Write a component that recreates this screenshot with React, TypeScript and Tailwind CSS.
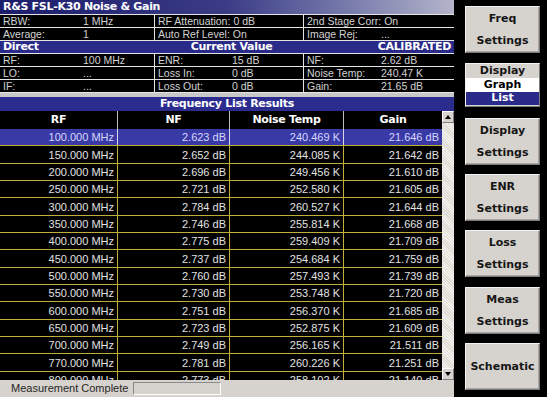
import React from "react";

const rows: string[][] = [
  ["100.000 MHz", "2.623 dB", "240.469 K", "21.646 dB"],
  ["150.000 MHz", "2.652 dB", "244.085 K", "21.642 dB"],
  ["200.000 MHz", "2.696 dB", "249.456 K", "21.610 dB"],
  ["250.000 MHz", "2.721 dB", "252.580 K", "21.605 dB"],
  ["300.000 MHz", "2.784 dB", "260.527 K", "21.644 dB"],
  ["350.000 MHz", "2.746 dB", "255.814 K", "21.668 dB"],
  ["400.000 MHz", "2.775 dB", "259.409 K", "21.709 dB"],
  ["450.000 MHz", "2.737 dB", "254.684 K", "21.759 dB"],
  ["500.000 MHz", "2.760 dB", "257.493 K", "21.739 dB"],
  ["550.000 MHz", "2.730 dB", "253.748 K", "21.720 dB"],
  ["600.000 MHz", "2.751 dB", "256.370 K", "21.685 dB"],
  ["650.000 MHz", "2.723 dB", "252.875 K", "21.609 dB"],
  ["700.000 MHz", "2.749 dB", "256.165 K", "21.511 dB"],
  ["770.000 MHz", "2.781 dB", "260.226 K", "21.251 dB"],
  ["800.000 MHz", "2.773 dB", "258.102 K", "21.140 dB"],
];

const sans = "font-['Liberation_Sans',Arial,sans-serif]";
const bold = "font-['DejaVu_Sans',Verdana,sans-serif] font-bold";

function InfoCell({ label, value, lw }: { label: string; value: string; lw: string }) {
  return (
    <div className="bg-black flex items-center pl-[3px] text-[#d2d2d2] text-[10.5px] leading-[12px] overflow-hidden whitespace-nowrap">
      <span className={`${lw} shrink-0 pr-[3px]`}>{label}</span>
      <span>{value}</span>
    </div>
  );
}

function InfoRow({ cells }: { cells: [string, string][] }) {
  return (
    <div className="grid grid-cols-[154px_148px_1fr] gap-px h-[12px]">
      <InfoCell label={cells[0][0]} value={cells[0][1]} lw="min-w-[80px]" />
      <InfoCell label={cells[1][0]} value={cells[1][1]} lw="min-w-[74px]" />
      <InfoCell label={cells[2][0]} value={cells[2][1]} lw="min-w-[74px]" />
    </div>
  );
}

function Button({ lines, className }: { lines: string[]; className: string }) {
  return (
    <div
      className={`w-[75px] h-[47px] ml-[11px] bg-[#d6d3ce] border border-t-[#f4f4f4] border-l-[#f4f4f4] border-r-[#7a7a7a] border-b-[#7a7a7a] shadow-[inset_-1px_-1px_0_#a8a5a0] flex flex-col items-center justify-center text-[11px] leading-[22px] text-[#161616] ${bold} ${className}`}
    >
      {lines.map((l) => (
        <span key={l}>{l}</span>
      ))}
    </div>
  );
}

export default function App() {
  return (
    <div className={`w-[547px] h-[409px] bg-white overflow-hidden ${sans}`}>
      <div className="flex h-[397px] bg-black">
        {/* Left panel */}
        <div className="w-[454px] flex flex-col bg-black">
          <div className={`h-[14px] bg-gradient-to-r from-[#1c1c6c] via-[#3c3c86] to-[#b4b4ca] text-white text-[11px] leading-[14px] pl-[3px] ${bold} tracking-[-0.3px]`}>
            R&amp;S FSL-K30 Noise &amp; Gain
          </div>
          <div className="flex flex-col gap-px bg-[#e4e4e4] pt-px">
            <InfoRow cells={[["RBW:", "1 MHz"], ["RF Attenuation:", "0 dB"], ["2nd Stage Corr:", "On"]]} />
            <InfoRow cells={[["Average:", "1"], ["Auto Ref Level:", "On"], ["Image Rej:", "..."]]} />
            <div className={`h-[12px] bg-[#2a2a88] text-white text-[11px] leading-[12px] flex items-center px-[3px] ${bold} tracking-[-0.3px]`}>
              <span>Direct</span>
              <span className="ml-[152px]">Current Value</span>
              <span className="ml-auto">CALIBRATED</span>
            </div>
            <InfoRow cells={[["RF:", "100 MHz"], ["ENR:", "15 dB"], ["NF:", "2.62 dB"]]} />
            <InfoRow cells={[["LO:", "..."], ["Loss In:", "0 dB"], ["Noise Temp:", "240.47 K"]]} />
            <InfoRow cells={[["IF:", "..."], ["Loss Out:", "0 dB"], ["Gain:", "21.65 dB"]]} />
            <div className="h-[4px] bg-[#c8c8c8]" />
          </div>
          <div className={`h-[14px] bg-[#2c2c8e] text-white text-[11px] leading-[14px] text-center ${bold} tracking-[-0.3px]`}>
            Frequency List Results
          </div>
          {/* table area */}
          <div className="flex h-[269px] overflow-hidden">
            <div className="w-[442px] flex flex-col">
              <div className={`h-[18px] shrink-0 grid grid-cols-[117px_111px_113px_1fr] gap-px bg-[#bdbdbd] text-white text-[11px] ${bold} tracking-[-0.3px]`}>
                {["RF", "NF", "Noise Temp", "Gain"].map((h) => (
                  <div key={h} className="bg-black flex items-center justify-center">
                    {h}
                  </div>
                ))}
              </div>
              <div className="flex flex-col gap-px bg-[#bfae3a]">
                {rows.map((r, i) => (
                  <div
                    key={r[0]}
                    className={`h-[16.35px] shrink-0 grid grid-cols-[117px_111px_113px_1fr] gap-px text-[11px] leading-[16px] ${i === 0 ? "bg-[#d8d8e8]" : ""}`}
                  >
                    {r.map((c, j) => (
                      <div
                        key={j}
                        className={`flex items-center justify-end pr-[3px] ${i === 0 ? "bg-[#3a3aa6] text-[#d6d8ff]" : "bg-black text-[#e2e2e2]"}`}
                      >
                        {c}
                      </div>
                    ))}
                  </div>
                ))}
              </div>
            </div>
            {/* scrollbar */}
            <div className="w-[12px] flex flex-col bg-[#eceae4]">
              <div className="h-[12px] bg-[#d6d3ce] border border-t-white border-l-white border-r-[#808080] border-b-[#808080] flex items-center justify-center">
                <svg width="6" height="4" viewBox="0 0 6 4"><path d="M3 0 L6 4 L0 4 Z" fill="#000" /></svg>
              </div>
              <div className="flex-1 bg-[repeating-linear-gradient(45deg,#f4f3ef_0px,#f4f3ef_1px,#dcd9d2_1px,#dcd9d2_2px)]" />
              <div className="h-[12px] bg-[#d6d3ce] border border-t-white border-l-white border-r-[#808080] border-b-[#808080] flex items-center justify-center">
                <svg width="6" height="4" viewBox="0 0 6 4"><path d="M0 0 L6 0 L3 4 Z" fill="#000" /></svg>
              </div>
            </div>
          </div>
          {/* status bar */}
          <div className="h-[17px] bg-[#d6d3ce] flex items-center text-[11px] text-[#262626]">
            <span className="pl-[11px] w-[133px]">Measurement Complete</span>
            <div className="w-[88px] h-[13px] border border-t-[#8a8a8a] border-l-[#8a8a8a] border-r-white border-b-white bg-[#d6d3ce]" />
          </div>
        </div>
        {/* Right panel */}
        <div className="flex-1 flex flex-col bg-black">
          <Button lines={["Freq", "Settings"]} className="mt-[6px]" />
          <div className={`mt-[10px] ml-[11px] w-[75px] h-[44px] border border-t-[#f4f4f4] border-l-[#f4f4f4] border-r-[#7a7a7a] border-b-[#7a7a7a] bg-[#d6d3ce] flex flex-col text-[11px] ${bold}`}>
            <div className="h-[14px] flex items-center justify-center text-[#161616]">Display</div>
            <div className="h-[14px] bg-white flex items-center justify-center text-black">Graph</div>
            <div className="h-[13px] bg-[#2a2a8a] flex items-center justify-center text-white">List</div>
          </div>
          <Button lines={["Display", "Settings"]} className="mt-[11px]" />
          <Button lines={["ENR", "Settings"]} className="mt-[9px]" />
          <Button lines={["Loss", "Settings"]} className="mt-[9px]" />
          <Button lines={["Meas", "Settings"]} className="mt-[10px]" />
          <Button lines={["Schematic"]} className="mt-[9px]" />
        </div>
      </div>
    </div>
  );
}
